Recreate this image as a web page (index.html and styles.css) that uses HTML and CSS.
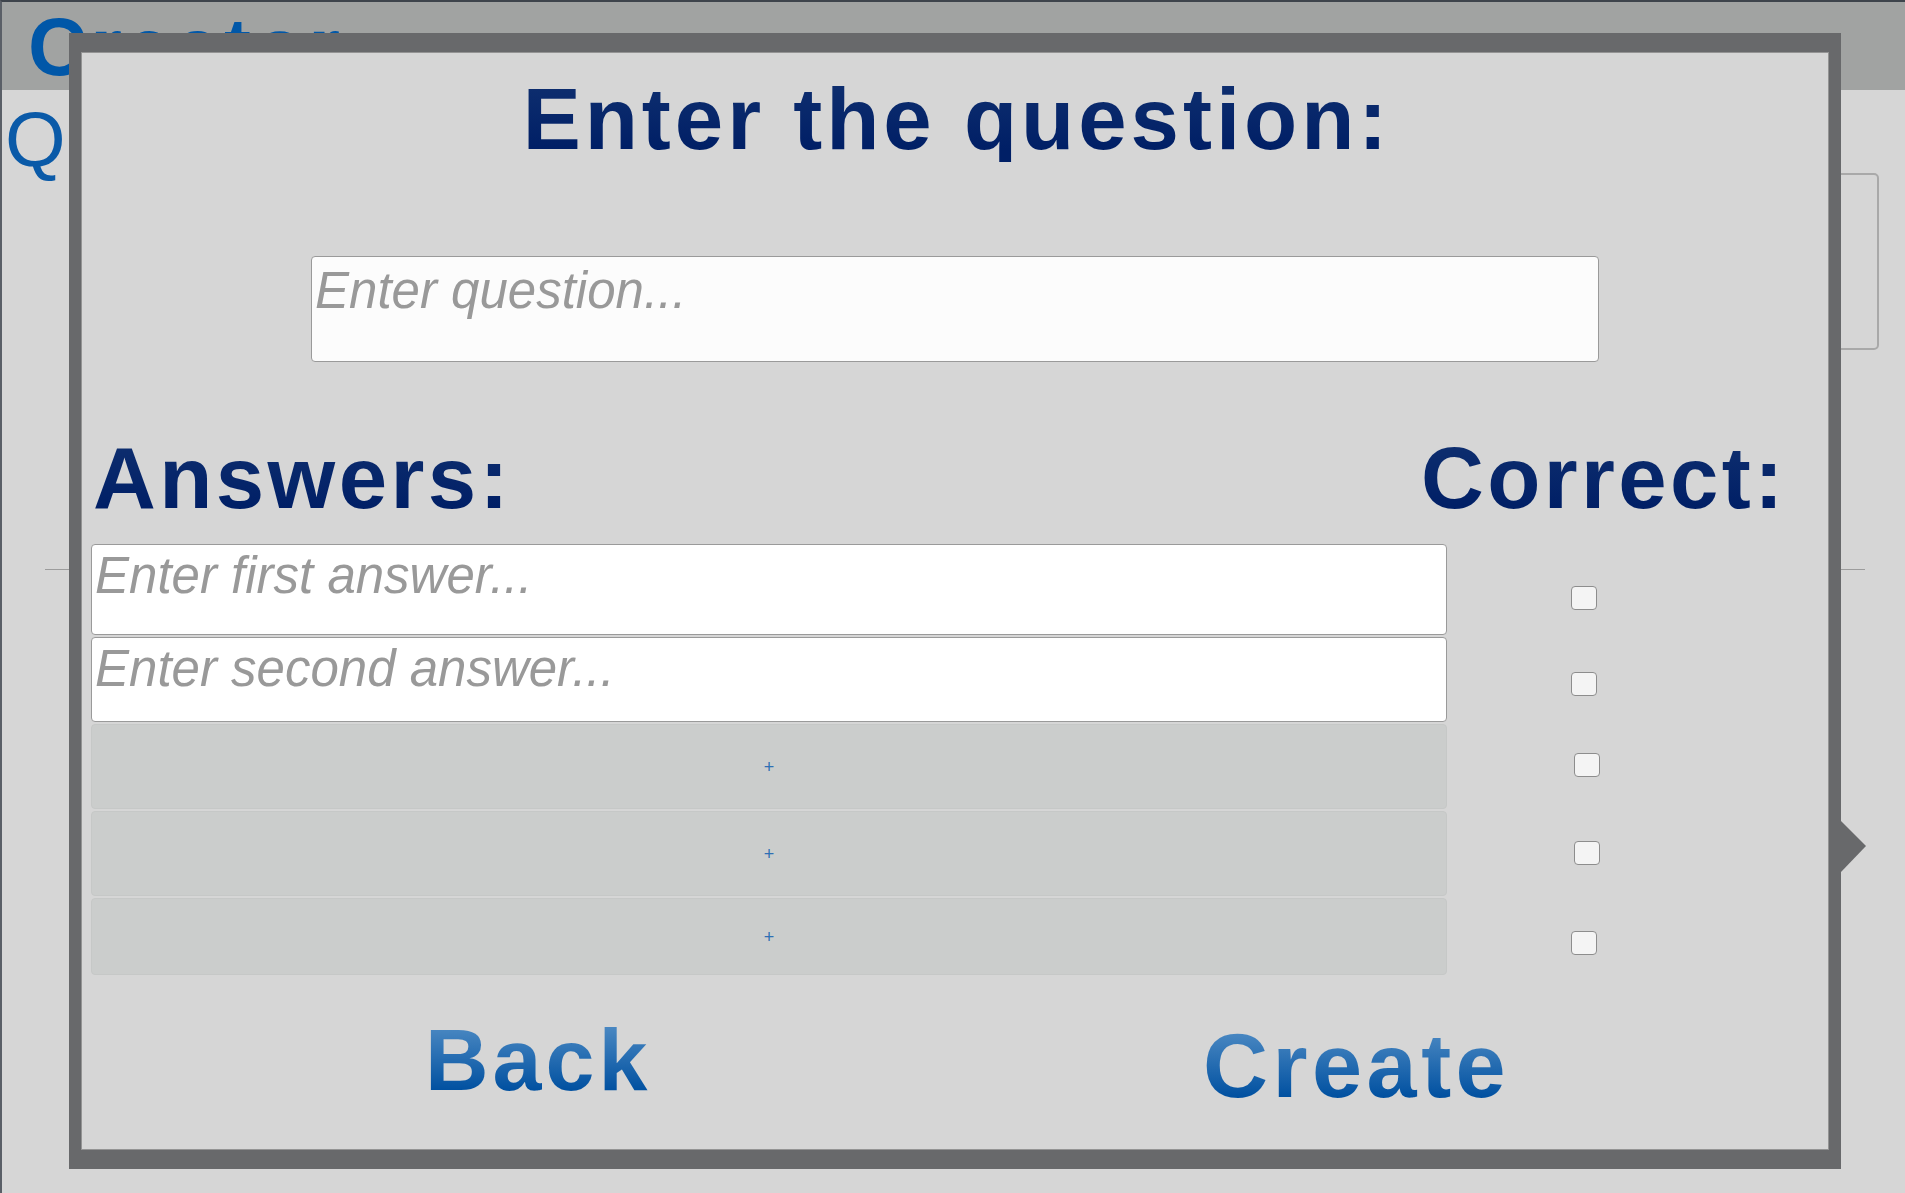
FILE: index.html
```html
<!DOCTYPE html>
<html lang="en">
<head>
<meta charset="utf-8">
<title>Creator</title>
<link rel="stylesheet" href="styles.css">
</head>
<body>
<div class="app">
  <header class="topbar">
    <h1 class="app-title">Creator</h1>
  </header>
  <main class="workspace">
    <div class="ws-top">
      <div class="ws-label">Question</div>
      <div class="ws-box"></div>
    </div>
    <hr class="ws-rule">
    <div class="ws-arrow"></div>
  </main>

  <section class="modal">
    <h2 class="modal-title">Enter the question:</h2>
    <textarea class="field field--question" placeholder="Enter question..."></textarea>

    <div class="answers-head">
      <span class="heading">Answers:</span>
      <span class="heading">Correct:</span>
    </div>

    <div class="answers">
      <div class="answer-row answer-row--tall">
        <textarea class="field field--answer" placeholder="Enter first answer..."></textarea>
        <span class="check check--r1"></span>
      </div>
      <div class="answer-row">
        <textarea class="field field--answer" placeholder="Enter second answer..."></textarea>
        <span class="check check--r2"></span>
      </div>
      <div class="answer-row">
        <button class="add-slot" type="button">+</button>
        <span class="check check--r3"></span>
      </div>
      <div class="answer-row">
        <button class="add-slot" type="button">+</button>
        <span class="check check--r4"></span>
      </div>
      <div class="answer-row answer-row--short">
        <button class="add-slot" type="button">+</button>
        <span class="check check--r5"></span>
      </div>
    </div>

    <div class="actions">
      <button class="action" type="button"><span class="action-text">Back</span></button>
      <button class="action action--create" type="button"><span class="action-text action-text--create">Create</span></button>
    </div>
  </section>
</div>
</body>
</html>
```

FILE: styles.css
```css
* { box-sizing: border-box; }

html, body {
  margin: 0;
  padding: 0;
}

body {
  width: 1905px;
  height: 1193px;
  overflow: hidden;
  background: #d6d6d6;
  font-family: "Liberation Sans", Arial, sans-serif;
}

.app {
  position: relative;
  width: 1905px;
  height: 1193px;
  border-top: 2px solid #3e444c;
  border-left: 2px solid #5a5f67;
  background: #d6d6d6;
}

/* ---------- background page ---------- */
.topbar {
  height: 88px;
  background: #a1a3a2;
  padding-left: 26px;
}

.app-title {
  margin: 0;
  padding-top: 5px;
  font-size: 81px;
  line-height: 81px;
  font-weight: bold;
  letter-spacing: 4px;
  color: #0057a8;
}

.workspace {
  padding: 10px 0 0 3px;
}

.ws-top {
  display: flex;
  align-items: flex-start;
}

.ws-label {
  font-size: 78px;
  line-height: 78px;
  color: #0a5aa8;
}

.ws-box {
  margin-left: auto;
  margin-right: 26px;
  margin-top: 73px;
  width: 1300px;
  height: 177px;
  border: 2px solid #a9a9a9;
  border-radius: 5px;
}

.ws-rule {
  margin: 219px 0 0 40px;
  width: 1820px;
  height: 0;
  border: 0;
  border-top: 1px solid #9c9c9c;
}

.ws-arrow {
  margin: 251px 0 0 1836px;
  width: 0;
  height: 0;
  border-left: 25px solid #68696b;
  border-top: 25px solid transparent;
  border-bottom: 26px solid transparent;
}

/* ---------- modal ---------- */
.modal {
  position: absolute;
  left: 67px;
  top: 31px;
  width: 1772px;
  height: 1136px;
  border-style: solid;
  border-color: #68696b;
  border-width: 19px 12px;
  background: #d6d6d6;
  box-shadow: inset 0 0 0 1px #949494;
  padding-top: 23px;
  display: flex;
  flex-direction: column;
}

.modal-title {
  margin: 0;
  padding-left: 4px;
  font-size: 87px;
  line-height: 87px;
  font-weight: bold;
  letter-spacing: 4px;
  text-align: center;
  background: linear-gradient(to bottom, #0d2d6e 15%, #001f66 85%);
  -webkit-background-clip: text;
  background-clip: text;
  color: transparent;
}

.field {
  display: block;
  resize: none;
  overflow: hidden;
  margin: 0;
  border: 1px solid #9a9a9a;
  border-radius: 4px;
  font-family: "Liberation Sans", Arial, sans-serif;
  font-style: italic;
  font-size: 51px;
  line-height: 57px;
  color: #333;
  outline: none;
}

.field::placeholder {
  color: #999999;
  font-style: italic;
  opacity: 1;
}

.field--question {
  margin: 94px auto 0;
  width: 1288px;
  height: 106px;
  padding: 5px 3px;
  background: #fcfcfc;
}

.field--answer {
  width: 100%;
  height: 100%;
  padding: 2px 3px;
  background: #ffffff;
}

.answers-head {
  margin-top: 72px;
  padding-left: 12px;
  display: grid;
  grid-template-columns: 1328px auto;
}

.heading {
  font-size: 87px;
  line-height: 87px;
  font-weight: bold;
  letter-spacing: 3.4px;
  background: linear-gradient(to bottom, #0d2d6e 15%, #001f66 85%);
  -webkit-background-clip: text;
  background-clip: text;
  color: transparent;
}

.answers {
  margin-top: 23px;
  padding-left: 10px;
  display: flex;
  flex-direction: column;
  gap: 2px;
}

.answer-row {
  display: grid;
  grid-template-columns: 1356px auto;
  height: 85px;
}

.answer-row--tall { height: 91px; }
.answer-row--short { height: 77px; }

.add-slot {
  margin: 0;
  padding: 0;
  width: 100%;
  height: 100%;
  background: #cbcdcc;
  border: 1px solid #c6c8c7;
  border-radius: 4px;
  font-family: "Liberation Sans", Arial, sans-serif;
  font-size: 18px;
  line-height: 1;
  color: #2f6fb4;
  cursor: pointer;
}

.check {
  align-self: start;
  width: 26px;
  height: 24px;
  margin-left: 124px;
  background: #f4f4f4;
  border: 1px solid #8d8d8d;
  border-radius: 4px;
}

.check--r1 { margin-top: 42px; }
.check--r2 { margin-top: 35px; }
.check--r3 { margin-top: 29px; margin-left: 127px; }
.check--r4 { margin-top: 30px; margin-left: 127px; }
.check--r5 { margin-top: 33px; }

.actions {
  margin-top: 41px;
  padding-left: 344px;
  display: grid;
  grid-template-columns: 778px auto;
  align-items: start;
}

.action {
  margin: 0;
  padding: 0;
  border: 0;
  background: none;
  text-align: left;
  cursor: pointer;
  font-family: "Liberation Sans", Arial, sans-serif;
}

.action--create { margin-top: 5px; }

.action-text {
  display: inline-block;
  font-size: 88px;
  line-height: 88px;
  font-weight: bold;
  letter-spacing: 4px;
  background: linear-gradient(to bottom, #4a88c2 12%, #0050a0 85%);
  -webkit-background-clip: text;
  background-clip: text;
  color: transparent;
}

.action-text--create {
  font-size: 90px;
  line-height: 90px;
  letter-spacing: 4.5px;
}
```
